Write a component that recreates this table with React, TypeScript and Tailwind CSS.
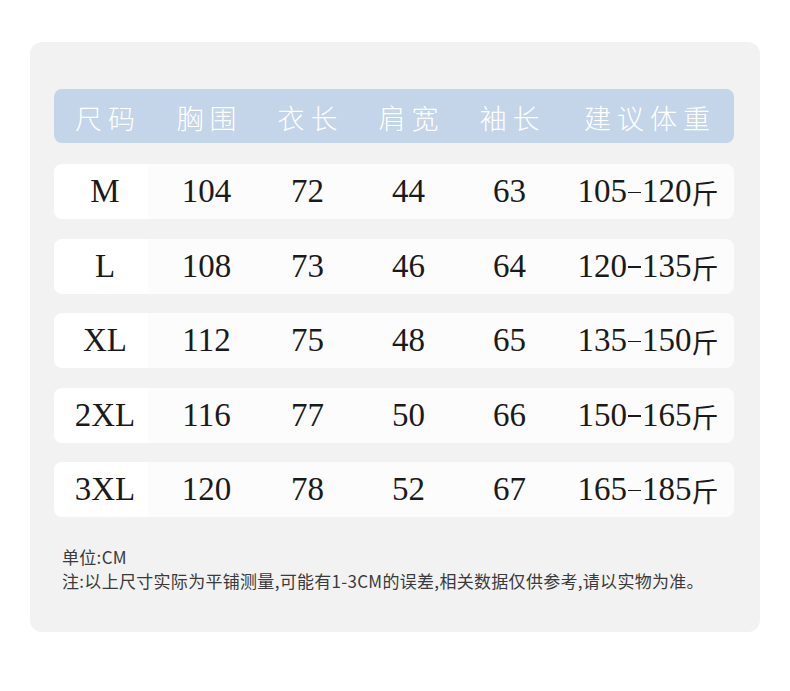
import React from "react";

const rows = [
  ["M", "104", "72", "44", "63", "105", "120"],
  ["L", "108", "73", "46", "64", "120", "135"],
  ["XL", "112", "75", "48", "65", "135", "150"],
  ["2XL", "116", "77", "50", "66", "150", "165"],
  ["3XL", "120", "78", "52", "67", "165", "185"],
];

const heads = ["尺码", "胸围", "衣长", "肩宽", "袖长", "建议体重"];

export default function App() {
  return (
    <div className="w-[790px] h-[691px] bg-white pt-[42px] pl-[30px]">
      <div className="w-[730px] h-[590px] bg-[#f2f2f2] rounded-[12px] pt-[47px] pl-[24px] pr-[26px]">
        <div className="grid grid-cols-[102px_101px_101px_101px_101px_1fr] h-[54px] items-center rounded-[8px] bg-[#c4d4e9] text-white text-[27px] leading-none font-light font-['Noto_Sans_CJK_SC','Noto_Sans',sans-serif]">
          {heads.map((h, i) => (
            <div key={i} className="text-center tracking-[6px] pl-[6px] pt-[2px]">
              {h}
            </div>
          ))}
        </div>
        <div className="mt-[21px] flex flex-col gap-[19.5px]">
          {rows.map((r, i) => (
            <div
              key={i}
              className="grid grid-cols-[102px_101px_101px_101px_101px_1fr] h-[55px] items-center rounded-[8px] bg-[linear-gradient(to_right,#ffffff_94px,#fcfcfc_94px)] text-[#1a1a1a] text-[33px] leading-none font-['Liberation_Serif','Noto_Sans_CJK_SC',serif]"
            >
              {r.slice(0, 5).map((c, j) => (
                <div key={j} className="text-center">
                  {c}
                </div>
              ))}
              <div className="flex items-center justify-center pl-[2px]">
                <span>{r[5]}</span>
                <span className="inline-block w-[13px] h-[1.5px] bg-[#1a1a1a] mx-[1px] mt-[2px]" />
                <span>{r[6]}</span>
                <span className="text-[27px] font-['Noto_Sans_CJK_SC',sans-serif] mt-[2px]">斤</span>
              </div>
            </div>
          ))}
        </div>
        <div className="mt-[28px] pl-[8px] text-[17px] leading-[24px] tracking-[0.3px] text-[#3a3a3a] font-['Noto_Sans_CJK_SC','Noto_Sans',sans-serif]">
          <div>单位:CM</div>
          <div>注:以上尺寸实际为平铺测量,可能有1-3CM的误差,相关数据仅供参考,请以实物为准。</div>
        </div>
      </div>
    </div>
  );
}
